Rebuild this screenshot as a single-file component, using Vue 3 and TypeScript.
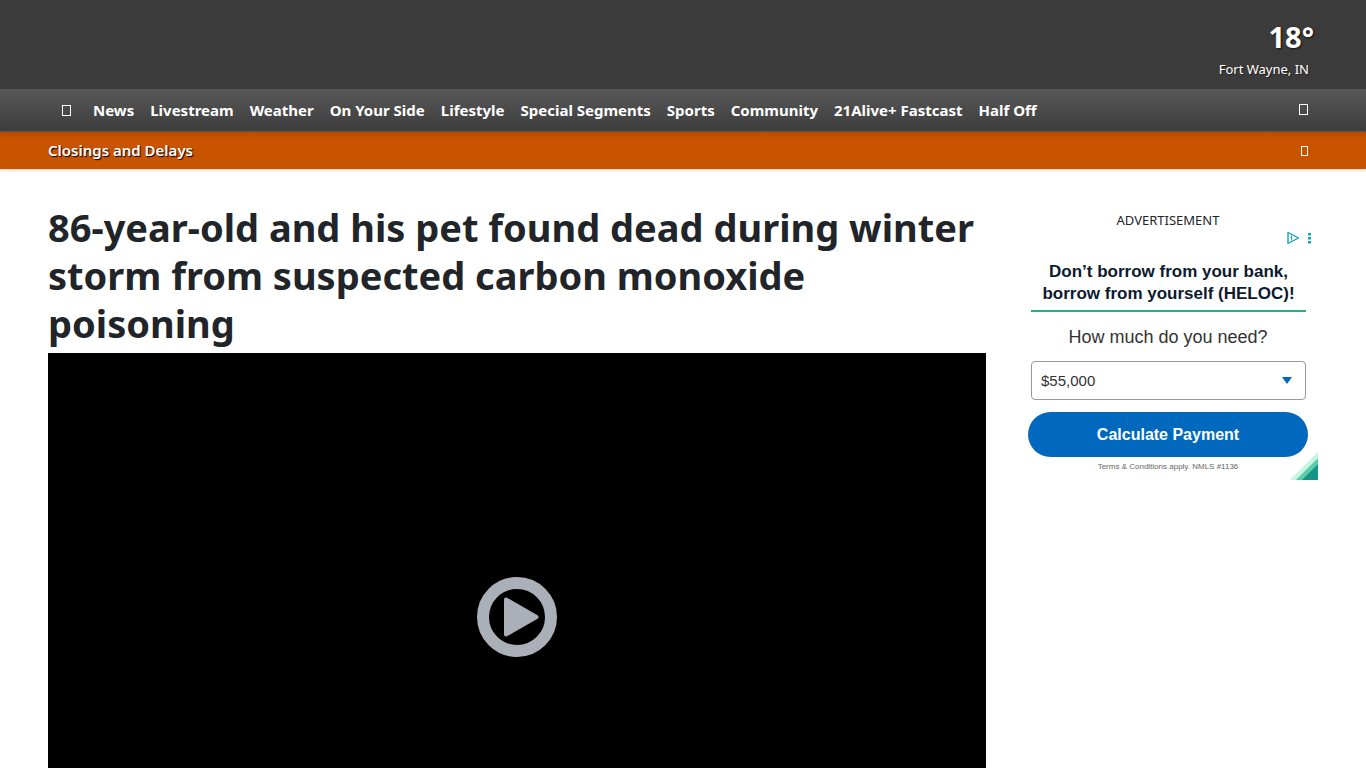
<script setup lang="ts">
import { ref } from 'vue'

const sections: string[] = [
  'News',
  'Livestream',
  'Weather',
  'On Your Side',
  'Lifestyle',
  'Special Segments',
  'Sports',
  'Community',
  '21Alive+ Fastcast',
  'Half Off',
]

const amounts: string[] = ['$55,000', '$75,000', '$100,000', '$150,000']
const amount = ref('$55,000')
</script>

<template>
  <div class="page">
    <header>
      <div class="masthead">
        <a class="weather" href="#">
          <span class="temp">18°</span>
          <span class="city">Fort Wayne, IN</span>
        </a>
      </div>
      <nav class="nav" aria-label="Main">
        <button class="icon-button home" type="button" aria-label="Home">
          <svg width="10" height="12" viewBox="0 0 10 12"><rect x="0.5" y="0.5" width="8" height="10" /></svg>
        </button>
        <ul>
          <li v-for="s in sections" :key="s"><a href="#">{{ s }}</a></li>
        </ul>
        <button class="icon-button search" type="button" aria-label="Search">
          <svg width="10" height="12" viewBox="0 0 10 12"><rect x="0.5" y="0.5" width="8" height="10" /></svg>
        </button>
      </nav>
      <div class="alert">
        <a href="#">Closings and Delays</a>
        <button class="icon-button" type="button" aria-label="Close">
          <svg width="9" height="11" viewBox="0 0 9 11"><rect x="1.5" y="0.5" width="6" height="9" /></svg>
        </button>
      </div>
    </header>

    <main class="content">
      <article>
        <h1>86-year-old and his pet found dead during winter storm from suspected carbon monoxide poisoning</h1>
        <div class="player">
          <button type="button" aria-label="Play video">
            <svg width="80" height="80" viewBox="0 0 80 80">
              <circle cx="40" cy="40" r="34" fill="none" stroke="#abafb7" stroke-width="12" />
              <path d="M29 22.5v35L59.500 40z" fill="#abafb7" stroke="#abafb7" stroke-width="4" stroke-linejoin="round" />
            </svg>
          </button>
        </div>
      </article>

      <aside>
        <p class="ad-label">ADVERTISEMENT</p>
        <section class="ad">
          <div class="ad-choices">
            <svg width="28" height="14" viewBox="0 0 28 14">
              <path d="M2 1.500v11L12.500 7z" fill="none" stroke="#14a5b8" stroke-width="1.400" stroke-linejoin="round" />
              <path d="M5.500 4.500v5" fill="none" stroke="#14a5b8" stroke-width="1" />
              <path d="M22 2h3v2.500h-3zM22 6h3v2.500h-3zM22 10h3v2.500h-3z" fill="#14a5b8" />
            </svg>
          </div>
          <h2>Don’t borrow from your bank,<br />borrow from yourself (HELOC)!</h2>
          <label for="amount">How much do you need?</label>
          <div class="select-box">
            <select id="amount" v-model="amount">
              <option v-for="a in amounts" :key="a">{{ a }}</option>
            </select>
            <svg width="10" height="7" viewBox="0 0 10 7"><path d="M0 0h10L5 7z" fill="#0069bd" /></svg>
          </div>
          <button class="calculate" type="button">Calculate Payment</button>
          <small>Terms &amp; Conditions apply. NMLS #1136</small>
          <svg class="corner" width="28" height="28" viewBox="0 0 28 28">
            <path d="M0 28L28 0v28z" fill="#c5f4df" />
            <path d="M6 28L28 6v22z" fill="#5bcca9" />
            <path d="M12 28L28 12v16z" fill="#159587" />
          </svg>
        </section>
      </aside>
    </main>
  </div>
</template>

<style>
html {
  scrollbar-width: none;
}
body {
  margin: 0;
  background: #fff;
}
</style>

<style scoped>
.page {
  font-family: "Segoe UI", "Noto Sans", sans-serif;
  color: #212529;
}
a {
  color: inherit;
  text-decoration: none;
}
button {
  padding: 0;
  border: 0;
  background: none;
  color: inherit;
  font: inherit;
  cursor: pointer;
}
svg {
  display: block;
}
.masthead {
  display: flex;
  justify-content: flex-end;
  height: 89px;
  padding: 0 48px;
  box-sizing: border-box;
  background: #3b3b3b;
  color: #fff;
}
.weather {
  display: flex;
  flex-direction: column;
  align-items: flex-end;
  padding: 18px 4px 0 0;
}
.temp {
  font-size: 29px;
  font-weight: 700;
  line-height: 38px;
  padding-bottom: 2px;
  text-shadow: 1px 1px 2px #111;
}
.city {
  padding-right: 5px;
  font-size: 13px;
  line-height: 22px;
  text-shadow: 1px 1px 1px #222;
}
.nav {
  display: flex;
  align-items: center;
  height: 43px;
  padding: 0 57px 0 60px;
  background: linear-gradient(#595959, #3b3b3b);
  color: #fff;
}
.nav ul {
  display: flex;
  flex: 1;
  gap: 16px;
  margin: 0;
  padding: 0 0 2px;
  list-style: none;
  font-size: 15px;
  font-weight: 700;
  line-height: 20px;
  white-space: nowrap;
}
.icon-button rect {
  fill: none;
  stroke: #fff;
  stroke-width: 1;
}
.home {
  padding: 0 21px 0 2px;
}
.search {
  padding-bottom: 2px;
}
.alert {
  display: flex;
  align-items: center;
  justify-content: space-between;
  height: 37px;
  padding: 0 57px 0 48px;
  background: linear-gradient(#b94a00, #c85400 8px);
  box-shadow: 0 1px 3px #f5c9a4;
  color: #fff;
  font-size: 15px;
  font-weight: 600;
  text-shadow: 1px 1px 1px #000;
}
.alert a {
  padding-bottom: 2px;
}
.alert button {
  padding-top: 2px;
}
.content {
  display: grid;
  grid-template-columns: minmax(0, 1fr) 300px;
  gap: 32px;
  padding: 34px 48px 0;
}
h1 {
  margin: 0;
  padding-bottom: 6px;
  font-size: 38px;
  font-weight: 700;
  line-height: 48px;
}
.player {
  display: flex;
  align-items: center;
  justify-content: center;
  aspect-ratio: 16 / 9;
  background: #000;
}
.ad-label {
  margin: 8px 0 0;
  font-size: 13px;
  line-height: 18px;
  text-align: center;
}
.ad {
  position: relative;
  display: flex;
  flex-direction: column;
  align-items: stretch;
  height: 250px;
  padding: 0 10px;
  margin-top: 1px;
  box-sizing: border-box;
  font-family: Arial, "Liberation Sans", sans-serif;
  text-align: center;
}
.ad-choices {
  display: flex;
  justify-content: flex-end;
  padding-top: 1px;
  margin-right: -6px;
}
h2 {
  margin: 16px 2px 0 3px;
  padding-bottom: 5px;
  border-bottom: 2px solid #1db588;
  color: #0b1a30;
  font-size: 17px;
  font-weight: 700;
  line-height: 22px;
  white-space: nowrap;
}
label {
  margin-top: 13px;
  color: #333;
  font-size: 18px;
  line-height: 24px;
}
.select-box {
  display: grid;
  align-items: center;
  margin: 12px 2px 12px 3px;
}
.select-box > * {
  grid-area: 1 / 1;
}
.select-box svg {
  justify-self: end;
  margin-right: 14px;
  pointer-events: none;
}
select {
  height: 39px;
  padding: 0 9px;
  appearance: none;
  border: 1px solid #999;
  border-radius: 4px;
  background: #fff;
  color: #333;
  font: 15px Arial, "Liberation Sans", sans-serif;
}
.calculate {
  height: 45px;
  flex: none;
  border-radius: 23px;
  background: #0069bd;
  color: #fff;
  font-size: 16px;
  font-weight: 700;
}
small {
  margin-top: 4px;
  color: #666;
  font-size: 8px;
  line-height: 12px;
}
.corner {
  position: absolute;
  right: 0;
  bottom: 0;
}
</style>
